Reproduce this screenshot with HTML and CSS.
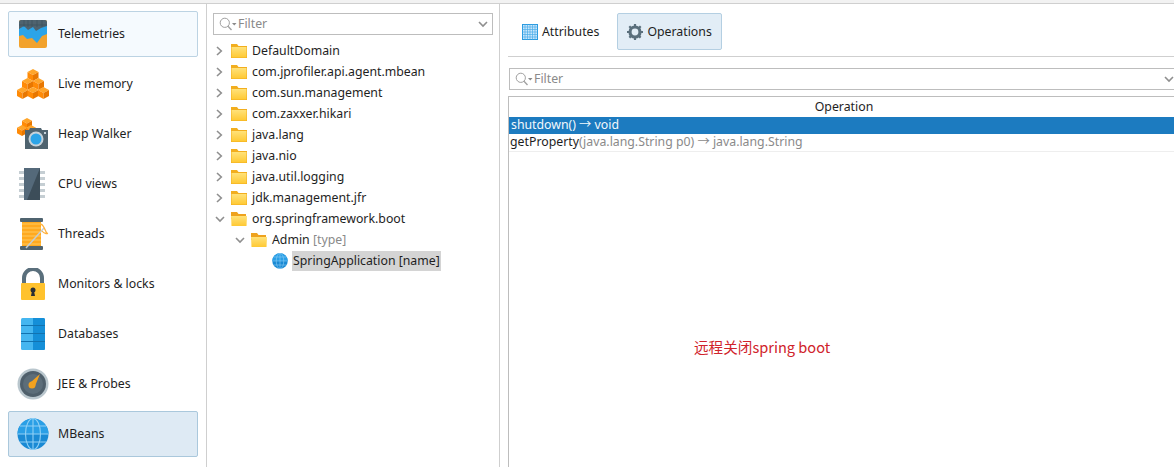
FILE: index.html
```html
<!DOCTYPE html>
<html lang="zh">
<head>
<meta charset="utf-8">
<title>JProfiler MBeans</title>
<link rel="stylesheet" href="styles.css">
</head>
<body>
<svg class="defs" width="0" height="0" aria-hidden="true">
  <defs>
    <linearGradient id="fold" x1="0" y1="0" x2="0" y2="1"><stop offset="0" stop-color="#ffe27a"/><stop offset="1" stop-color="#ffc933"/></linearGradient>
    <symbol id="folder" viewBox="0 0 16 16">
      <path d="M0 1h6l1.500 2H16V15H0z" fill="#f2ae1e"/>
      <path d="M.5 4H15.500V14.500H.5z" fill="url(#fold)"/>
    </symbol>
    <symbol id="folder-open" viewBox="0 0 16 16">
      <path d="M0 1h6l1.500 2H15V8H0z" fill="#eea21e"/>
      <path d="M0 5H16L15.500 15H.5z" fill="url(#fold)"/>
    </symbol>
    <symbol id="chev-right" viewBox="0 0 10 10"><path d="M2 1 6.300 5 2 9" fill="none" stroke="#8f8f8f" stroke-width="1.600"/></symbol>
    <symbol id="chev-down" viewBox="0 0 10 10"><path d="M1 3 5 7 9 3" fill="none" stroke="#8f8f8f" stroke-width="1.600"/></symbol>
    <symbol id="search" viewBox="0 0 18 14">
      <circle cx="5.800" cy="5.800" r="4.600" fill="none" stroke="#a0a0a0" stroke-width="1"/>
      <path d="M9 9.200 12.500 13" stroke="#a0a0a0" stroke-width="1.300"/>
      <path d="M13 6h4.500l-2.250 2.600z" fill="#8a8a8a"/>
    </symbol>
    <symbol id="globe" viewBox="0 0 32 32">
      <circle cx="16" cy="16" r="15.500" fill="#1a8ad4"/>
      <path d="M16 .5A15.500 15.500 0 0 1 31.500 16H.5A15.500 15.500 0 0 1 16 .5z" fill="#2a9fe6"/>
      <g fill="none" stroke="#8fd0f5" stroke-width="1.100">
        <ellipse cx="16" cy="16" rx="7.500" ry="15.500"/>
        <path d="M16 .5v31M.5 16h31M3 8h26M3 24h26"/>
      </g>
    </symbol>
    <symbol id="cube" viewBox="0 0 11 12" overflow="visible">
      <path d="M5.500 0 11 3 5.500 6 0 3z" fill="#ffa52a"/>
      <path d="M0 3 5.500 6v6L0 9z" fill="#ff8a06"/>
      <path d="M11 3 5.500 6v6L11 9z" fill="#e87700"/>
    </symbol>
  </defs>
</svg>

<div class="top-strip"></div>
<div class="app">
  <nav class="sidebar">
    <div class="nav-item nav-hover">
      <svg class="nav-icon" viewBox="0 0 32 32"><rect x="2" y="2" width="28" height="28" rx="2" fill="#f2a22c"/><path d="M2 4a2 2 0 0 1 2-2h24a2 2 0 0 1 2 2v10H2z" fill="#4f636f"/><path d="M2 11l5-3 4 4 5-3 3 4 5-3 6-2v8l-5 2-5 7-5-5-5 1-4-4-4 1z" fill="#2ba4e8"/><path d="M2 7h28M7 2v7M11 2v7M15 2v7M20 2v7M25 2v7" stroke="#3e505c" stroke-width=".7"/></svg>
      <span>Telemetries</span>
    </div>
    <div class="nav-item">
      <svg class="nav-icon" viewBox="0 0 32 32"><use href="#cube" x="10.500" y="1" width="11" height="12"/><use href="#cube" x="5" y="10" width="11" height="12"/><use href="#cube" x="16" y="10" width="11" height="12"/><use href="#cube" x="0" y="19" width="11" height="12"/><use href="#cube" x="10.500" y="19" width="11" height="12"/><use href="#cube" x="21" y="19" width="11" height="12"/></svg>
      <span>Live memory</span>
    </div>
    <div class="nav-item">
      <svg class="nav-icon" viewBox="0 0 32 32"><use href="#cube" x="5" y="0" width="10" height="11"/><use href="#cube" x="0" y="7" width="10" height="11"/><use href="#cube" x="9" y="7" width="10" height="11"/><path d="M8 12h4l1-2h11l1 2h6v19H8z" fill="#4f636f"/><circle cx="19" cy="21" r="7.500" fill="#c6d2da"/><circle cx="19" cy="21" r="5.500" fill="#2ba4e8"/><rect x="27" y="14" width="2" height="2" fill="#c6d2da"/></svg>
      <span>Heap Walker</span>
    </div>
    <div class="nav-item">
      <svg class="nav-icon" viewBox="0 0 32 32"><g fill="#c5ced3"><rect x="2" y="3" width="26" height="3"/><rect x="2" y="9" width="26" height="3"/><rect x="2" y="15" width="26" height="3"/><rect x="2" y="21" width="26" height="3"/><rect x="2" y="27" width="26" height="3"/></g><rect x="7" y="0" width="16" height="32" fill="#54697a"/><path d="M23 0v32H10z" fill="#3c4d59"/></svg>
      <span>CPU views</span>
    </div>
    <div class="nav-item">
      <svg class="nav-icon" viewBox="0 0 32 32"><rect x="5" y="3" width="19" height="26" fill="#ffa91f"/><path d="M5 6h19M5 10h19M5 14h19M5 18h19M5 22h19M5 26h19" stroke="#ffc95e"/><rect x="3" y="0" width="23" height="4" rx="1" fill="#4f636f"/><rect x="3" y="28" width="23" height="4" rx="1" fill="#4f636f"/><path d="M9 30 27 10" stroke="#c7cdd0" stroke-width="1.500"/><path d="M24 6c4 2 4 8 6 9s-3 1-5-2" fill="none" stroke="#ffb13d" stroke-width="1.300"/></svg>
      <span>Threads</span>
    </div>
    <div class="nav-item">
      <svg class="nav-icon" viewBox="0 0 32 32"><path d="M7 16V10a9 9 0 0 1 18 0v6" fill="none" stroke="#5a6f7c" stroke-width="4"/><rect x="4" y="15" width="24" height="17" rx="1" fill="#ffc22d"/><circle cx="16" cy="22" r="2.500" fill="#2b2f33"/><path d="M15 23h2l1 5h-4z" fill="#2b2f33"/></svg>
      <span>Monitors &amp; locks</span>
    </div>
    <div class="nav-item">
      <svg class="nav-icon" viewBox="0 0 32 32"><rect x="4" y="0" width="24" height="32" rx="1.500" fill="#45b6f0"/><path d="M16 0h10.500a1.500 1.500 0 0 1 1.500 1.500v29a1.500 1.500 0 0 1-1.500 1.500H16z" fill="#158fd8"/><path d="M4 7.500h24M4 15.500h24M4 23.500h24" stroke="#1273b0" stroke-width="1"/></svg>
      <span>Databases</span>
    </div>
    <div class="nav-item">
      <svg class="nav-icon" viewBox="0 0 32 32"><circle cx="16" cy="16" r="15.500" fill="#b9c6cd"/><circle cx="16" cy="16" r="13" fill="#4f5f6b"/><circle cx="16" cy="16" r="10" fill="#5c6d79"/><path d="M14 14 23 6 18 18z" fill="#f4a21e"/><circle cx="15" cy="17" r="3.500" fill="#f4a21e"/></svg>
      <span>JEE &amp; Probes</span>
    </div>
    <div class="nav-item nav-active">
      <svg class="nav-icon"><use href="#globe"/></svg>
      <span>MBeans</span>
    </div>
  </nav>

  <section class="tree-panel">
    <div class="filter tree-filter">
      <svg class="search-icon"><use href="#search"/></svg>
      <span class="filter-text">Filter</span>
      <svg class="filter-chev"><use href="#chev-down"/></svg>
    </div>
    <ul class="tree">
      <li class="row"><svg class="twisty"><use href="#chev-right"/></svg><svg class="folder"><use href="#folder"/></svg><span>DefaultDomain</span></li>
      <li class="row"><svg class="twisty"><use href="#chev-right"/></svg><svg class="folder"><use href="#folder"/></svg><span>com.jprofiler.api.agent.mbean</span></li>
      <li class="row"><svg class="twisty"><use href="#chev-right"/></svg><svg class="folder"><use href="#folder"/></svg><span>com.sun.management</span></li>
      <li class="row"><svg class="twisty"><use href="#chev-right"/></svg><svg class="folder"><use href="#folder"/></svg><span>com.zaxxer.hikari</span></li>
      <li class="row"><svg class="twisty"><use href="#chev-right"/></svg><svg class="folder"><use href="#folder"/></svg><span>java.lang</span></li>
      <li class="row"><svg class="twisty"><use href="#chev-right"/></svg><svg class="folder"><use href="#folder"/></svg><span>java.nio</span></li>
      <li class="row"><svg class="twisty"><use href="#chev-right"/></svg><svg class="folder"><use href="#folder"/></svg><span>java.util.logging</span></li>
      <li class="row"><svg class="twisty"><use href="#chev-right"/></svg><svg class="folder"><use href="#folder"/></svg><span>jdk.management.jfr</span></li>
      <li class="row"><svg class="twisty"><use href="#chev-down"/></svg><svg class="folder"><use href="#folder-open"/></svg><span>org.springframework.boot</span></li>
      <li class="row depth-1"><svg class="twisty"><use href="#chev-down"/></svg><svg class="folder"><use href="#folder-open"/></svg><span>Admin <em class="muted">[type]</em></span></li>
      <li class="row depth-2"><svg class="folder globe-leaf"><use href="#globe"/></svg><span class="picked">SpringApplication [name]</span></li>
    </ul>
  </section>

  <section class="main-panel">
    <div class="tabs">
      <div class="tab">
        <svg class="tab-icon" viewBox="0 0 16 16"><rect x=".5" y=".5" width="15" height="15" fill="#c9e7fb" stroke="#2b9be0"/><path d="M.5 3h15M.5 5.500h15M.5 8h15M.5 10.500h15M.5 13h15M3 .5v15M5.500 .5v15M8 .5v15M10.500 .5v15M13 .5v15" stroke="#4aaeea" stroke-width=".7"/></svg>
        <span>Attributes</span>
      </div>
      <div class="tab tab-active">
        <svg class="tab-icon" viewBox="0 0 16 16"><circle cx="8" cy="8" r="5" fill="none" stroke="#5a6f7c" stroke-width="3.200"/><path d="M8 0v16M0 8h16M2.300 2.300l11.400 11.400M13.700 2.300 2.300 13.700" stroke="#5a6f7c" stroke-width="2.200" stroke-dasharray="2.400 11.200 2.400"/></svg>
        <span>Operations</span>
      </div>
    </div>
    <div class="filter main-filter">
      <svg class="search-icon"><use href="#search"/></svg>
      <span class="filter-text">Filter</span>
      <svg class="filter-chev"><use href="#chev-down"/></svg>
    </div>
    <div class="table">
      <div class="thead">Operation</div>
      <div class="trow trow-selected">shutdown() → void</div>
      <div class="trow">getProperty<span class="muted">(java.lang.String p0) → java.lang.String</span></div>
      <div class="note">远程关闭spring boot</div>
    </div>
  </section>
</div>
</body>
</html>
```

FILE: styles.css
```css
* { box-sizing: border-box; }
html, body { margin: 0; height: 100%; overflow: hidden; }
body {
  width: 1174px;
  height: 467px;
  background: #fff;
  color: #1e1e1e;
  font-family: "Noto Sans", "Noto Sans CJK SC", sans-serif;
  font-size: 12.300px;
  display: flex;
  flex-direction: column;
}
.defs { position: absolute; }
.top-strip { height: 4px; flex: none; background: #f2f2f2; border-bottom: 1px solid #cfcfcf; }
.app { flex: 1; display: flex; min-height: 0; }

.sidebar {
  width: 207px;
  flex: none;
  border-right: 1px solid #cfcfcf;
  padding: 7px 8px 0;
  display: flex;
  flex-direction: column;
  gap: 4px;
}
.nav-item {
  height: 46px;
  width: 190px;
  flex: none;
  display: flex;
  align-items: center;
  gap: 9px;
  padding-left: 8px;
  border: 1px solid transparent;
  border-radius: 2px;
}
.nav-item span { margin-top: -2px; }
.nav-icon { width: 32px; height: 32px; flex: none; }
.nav-hover { background: #f5fafe; border-color: #bcd3e3; }
.nav-active { background: #deeaf4; border-color: #aac8dc; }

.tree-panel {
  width: 293px;
  flex: none;
  border-right: 1px solid #cfcfcf;
  padding: 9px 6px 0;
}
.filter {
  height: 22px;
  border: 1px solid #bdbdbd;
  display: flex;
  align-items: center;
  color: #8a8a8a;
  background: #fff;
}
.search-icon { width: 18px; height: 14px; margin-left: 5px; flex: none; }
.filter-text { margin-left: 1px; margin-top: -2px; flex: 1; }
.filter-chev { width: 10px; height: 10px; margin-right: 4px; flex: none; }
.tree-filter { width: 280px; }

.tree { list-style: none; margin: 5px 0 0 -6px; padding: 0; }
.row { height: 21px; display: flex; align-items: center; padding-left: 8px; white-space: nowrap; }
.depth-1 { padding-left: 28px; }
.depth-2 { padding-left: 65px; }
.twisty { width: 10px; height: 10px; flex: none; margin-right: 6px; }
.folder { width: 16px; height: 16px; flex: none; margin-right: 5px; }
.globe-leaf { margin-right: 4px; }
.picked { background: #d4d4d4; padding: 0 1px; line-height: 20px; }
.muted { color: #8a8a8a; font-style: normal; }

.main-panel { flex: 1; min-width: 0; padding: 9px 0 0 8px; display: flex; flex-direction: column; }
.tabs { height: 44px; flex: none; display: flex; gap: 8px; border-bottom: 1px solid #cfcfcf; }
.tab { height: 37px; display: flex; align-items: center; gap: 4px; padding: 0 9px 0 13px; border: 1px solid transparent; border-radius: 2px; }
.tab-icon { width: 16px; height: 16px; flex: none; }
.tab-active { background: #e2edf6; border-color: #b4cfe2; padding: 0 9px; }
.main-filter { margin: 11px -5px 0 1px; flex: none; }
.table { position: relative; flex: 1; margin: 6px -5px 0 0; border-left: 1px solid #bdbdbd; border-top: 1px solid #bdbdbd; }
.thead { height: 20px; line-height: 19px; text-align: center; }
.trow { height: 18px; line-height: 16px; padding-left: 1px; border-bottom: 1px solid #eeeeee; white-space: nowrap; }
.trow-selected { background: #1c7bc0; color: #f2f8fc; border-bottom: none; height: 17px; padding-left: 2px; }
.note { position: absolute; left: 185px; top: 239px; color: #d0232b; font-size: 14.600px; font-family: "Noto Sans CJK SC", sans-serif; }
```
